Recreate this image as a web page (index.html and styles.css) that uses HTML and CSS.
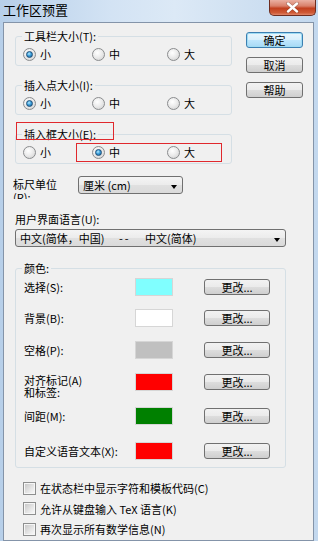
FILE: index.html
```html
<!DOCTYPE html>
<html lang="zh">
<head>
<meta charset="utf-8">
<link rel="stylesheet" href="styles.css">
</head>
<body>
<div class="window">
  <div class="titlebar">
    <span class="title">工作区预置</span>
    <span class="close"><svg width="13" height="11" viewBox="0 0 13 11"><path d="M2 1.5 L11 9.5 M11 1.5 L2 9.5" stroke="#3a1a10" stroke-width="3.6" stroke-linecap="round" opacity="0.35"/><path d="M2 1.5 L11 9.5 M11 1.5 L2 9.5" stroke="#ffffff" stroke-width="2.4" stroke-linecap="round"/></svg></span>
  </div>
  <div class="client">
    <div class="top">
      <div class="groups">
        <div class="group">
          <span class="legend">工具栏大小(T):</span>
          <div class="radios">
            <span class="opt"><span class="radio on"></span>小</span>
            <span class="opt"><span class="radio"></span>中</span>
            <span class="opt"><span class="radio"></span>大</span>
          </div>
        </div>
        <div class="group next">
          <span class="legend">插入点大小(I):</span>
          <div class="radios">
            <span class="opt"><span class="radio on"></span>小</span>
            <span class="opt"><span class="radio"></span>中</span>
            <span class="opt"><span class="radio"></span>大</span>
          </div>
        </div>
        <div class="group next">
          <span class="legend">插入框大小(E):</span>
          <div class="radios">
            <span class="opt"><span class="radio"></span>小</span>
            <span class="opt"><span class="radio on"></span>中</span>
            <span class="opt"><span class="radio"></span>大</span>
          </div>
          <span class="mark mark1"></span>
          <span class="mark mark2"></span>
        </div>
      </div>
      <div class="buttons">
        <button class="btn default">确定</button>
        <button class="btn">取消</button>
        <button class="btn">帮助</button>
      </div>
    </div>

    <div class="unit-row">
      <span class="unit-label">标尺单位(R):</span>
      <div class="combo w1"><span>厘米 (cm)</span><i class="arrow"></i></div>
    </div>

    <div class="lang-label">用户界面语言(U):</div>
    <div class="combo w2"><span class="val"><span class="seg1">中文(简体，中国)</span><span class="dash">--</span><span>中文(简体)</span></span><i class="arrow"></i></div>

    <div class="group colors">
      <span class="legend">颜色:</span>
      <div class="crow">
        <span class="clabel">选择(S):</span>
        <span class="swatch cyan"></span>
        <button class="btn cbtn">更改...</button>
      </div>
      <div class="crow r2">
        <span class="clabel">背景(B):</span>
        <span class="swatch white"></span>
        <button class="btn cbtn">更改...</button>
      </div>
      <div class="crow r3">
        <span class="clabel">空格(P):</span>
        <span class="swatch gray"></span>
        <button class="btn cbtn">更改...</button>
      </div>
      <div class="crow r4">
        <span class="clabel two">对齐标记(A)<br>和标签:</span>
        <span class="swatch red"></span>
        <button class="btn cbtn">更改...</button>
      </div>
      <div class="crow r5">
        <span class="clabel">间距(M):</span>
        <span class="swatch green"></span>
        <button class="btn cbtn">更改...</button>
      </div>
      <div class="crow r6">
        <span class="clabel">自定义语音文本(X):</span>
        <span class="swatch red"></span>
        <button class="btn cbtn">更改...</button>
      </div>
    </div>

    <div class="checks">
      <div class="chk"><span class="box"></span>在状态栏中显示字符和模板代码(C)</div>
      <div class="chk"><span class="box"></span>允许从键盘输入 TeX 语言(K)</div>
      <div class="chk"><span class="box"></span>再次显示所有数学信息(N)</div>
    </div>
  </div>
</div>
</body>
</html>
```

FILE: styles.css
```css
html, body {
  margin: 0;
  padding: 0;
}
body {
  width: 318px;
  height: 541px;
  overflow: hidden;
  font-family: "Noto Sans CJK SC", "Noto Sans", sans-serif;
  font-size: 11px;
  line-height: 14px;
  color: #000;
}
.window {
  width: 318px;
  height: 541px;
  box-sizing: border-box;
  display: flex;
  flex-direction: column;
  padding: 0 4px 4px 3px;
  background: linear-gradient(to right, #b7cfe9 0%, #d3e3f4 35%, #dce9f6 55%, #c3d8ee 100%);
}
.titlebar {
  height: 22px;
  flex: none;
  display: flex;
  justify-content: space-between;
  align-items: flex-start;
}
.title {
  font-size: 13px;
  line-height: 20px;
  color: #000;
}
.close {
  width: 47px;
  height: 16px;
  margin-right: -2px;
  box-sizing: border-box;
  border: 1px solid #6e2d1f;
  border-top: none;
  border-radius: 0 0 5px 5px;
  background: linear-gradient(#eab0a2 0%, #d9806a 40%, #c2401f 55%, #cf5a36 85%, #e0866a 100%);
  display: flex;
  align-items: center;
  justify-content: center;
}
.client {
  flex: 1;
  background: #f0f0f0;
  border: 1px solid #8494a9;
  padding: 0 0 0 11px;
  display: flex;
  flex-direction: column;
}
.top {
  display: flex;
  gap: 14px;
  align-items: flex-start;
}
.groups {
  width: 217px;
  padding-top: 13px;
}
.group {
  position: relative;
  border: 1px solid #d5dfe5;
  border-radius: 3px;
  padding: 9px 0 3px;
}
.group.next {
  margin-top: 19px;
}
.legend {
  position: absolute;
  top: -8px;
  left: 6px;
  padding: 0 2px;
  background: #f0f0f0;
  line-height: 14px;
  white-space: nowrap;
}
.radios {
  display: grid;
  grid-template-columns: 69px 75px auto;
  padding-left: 7px;
  height: 16px;
  align-items: center;
}
.opt {
  display: flex;
  align-items: center;
  gap: 4px;
}
.radio {
  position: relative;
  width: 13px;
  height: 13px;
  box-sizing: border-box;
  border-radius: 50%;
  border: 1px solid #8a8c8e;
  background: radial-gradient(circle at 40% 35%, #ffffff 0%, #ececec 45%, #cdcdcd 100%);
}
.radio.on::after {
  content: "";
  position: absolute;
  left: 2px;
  top: 2px;
  width: 5px;
  height: 5px;
  border-radius: 50%;
  border: 1px solid #1e4f78;
  background: radial-gradient(circle at 40% 35%, #b8ecff 0%, #3b9fdc 45%, #175a8c 100%);
}
.mark {
  position: absolute;
  box-sizing: border-box;
  border: 1px solid #e0282d;
}
.mark1 {
  left: 0;
  top: -13px;
  width: 98px;
  height: 18px;
}
.mark2 {
  left: 60px;
  top: 8px;
  width: 146px;
  height: 19px;
}
.buttons {
  display: flex;
  flex-direction: column;
  gap: 9px;
  padding-top: 9px;
}
.btn {
  width: 57px;
  height: 16px;
  box-sizing: border-box;
  padding: 0;
  border: 1px solid #707070;
  border-radius: 3px;
  background: linear-gradient(#f2f2f2 0%, #ebebeb 48%, #dddddd 52%, #cfcfcf 100%);
  font-family: inherit;
  font-size: 11px;
  line-height: 14px;
  color: #000;
  text-align: center;
}
.btn.default {
  border-color: #3c7fb1;
  box-shadow: inset 0 0 0 1px #9fdcf4;
  background: linear-gradient(#eaf6fd 0%, #d9f0fc 48%, #bee6fd 52%, #a7d9f5 100%);
}
.unit-row {
  display: flex;
  align-items: flex-start;
  margin-top: 12px;
}
.unit-label {
  width: 50px;
  height: 21px;
  overflow: hidden;
  line-height: 13px;
  margin: 2px 15px 0 -2px;
}
.combo {
  height: 18px;
  box-sizing: border-box;
  border: 1px solid #707070;
  border-radius: 3px;
  background: linear-gradient(#f4f4f4 0%, #ececec 48%, #e0e0e0 52%, #dadada 100%);
  display: flex;
  align-items: center;
  justify-content: space-between;
  padding: 0 5px 0 4px;
  line-height: 14px;
}
.arrow {
  width: 0;
  height: 0;
  border-left: 3.5px solid transparent;
  border-right: 3.5px solid transparent;
  border-top: 4px solid #000;
  margin-top: 3px;
}
.w1 {
  width: 105px;
}
.lang-label {
  margin-top: 13px;
}
.w2 {
  width: 271px;
  margin-top: 3px;
}
.val {
  display: flex;
  white-space: nowrap;
}
.seg1 {
  width: 99px;
}
.dash {
  width: 26px;
  letter-spacing: 2px;
}
.colors {
  width: 271px;
  box-sizing: border-box;
  margin-top: 21px;
  padding: 9px 0 7px 8px;
}
.crow {
  display: flex;
  align-items: center;
  height: 18px;
}
.r2 { margin-top: 13px; }
.r3 { margin-top: 14px; }
.r4 { margin-top: 14px; }
.r5 { margin-top: 16px; }
.r6 { margin-top: 17px; }
.clabel {
  width: 111px;
  line-height: 12px;
  white-space: nowrap;
}
.clabel.two {
  align-self: flex-start;
  margin-top: 1px;
  height: 18px;
}
.swatch {
  width: 38px;
  height: 18px;
  box-sizing: border-box;
  border: 1px solid #d6d6d6;
  margin-right: 31px;
}
.cyan { background: #80ffff; }
.white { background: #ffffff; }
.gray { background: #c0c0c0; }
.red { background: #ff0000; }
.green { background: #008000; }
.cbtn {
  width: 66px;
}
.checks {
  margin-top: 10px;
  padding-left: 8px;
}
.chk {
  display: flex;
  align-items: center;
  gap: 4px;
  height: 20.5px;
}
.box {
  position: relative;
  width: 13px;
  height: 13px;
  box-sizing: border-box;
  border: 1px solid #8e8f8f;
  background: #f6f6f6;
}
.box::after {
  content: "";
  position: absolute;
  left: 1px;
  top: 1px;
  width: 9px;
  height: 9px;
  background: linear-gradient(135deg, #c9c9c9 0%, #e6e6e6 60%, #f7f7f7 100%);
}
```
